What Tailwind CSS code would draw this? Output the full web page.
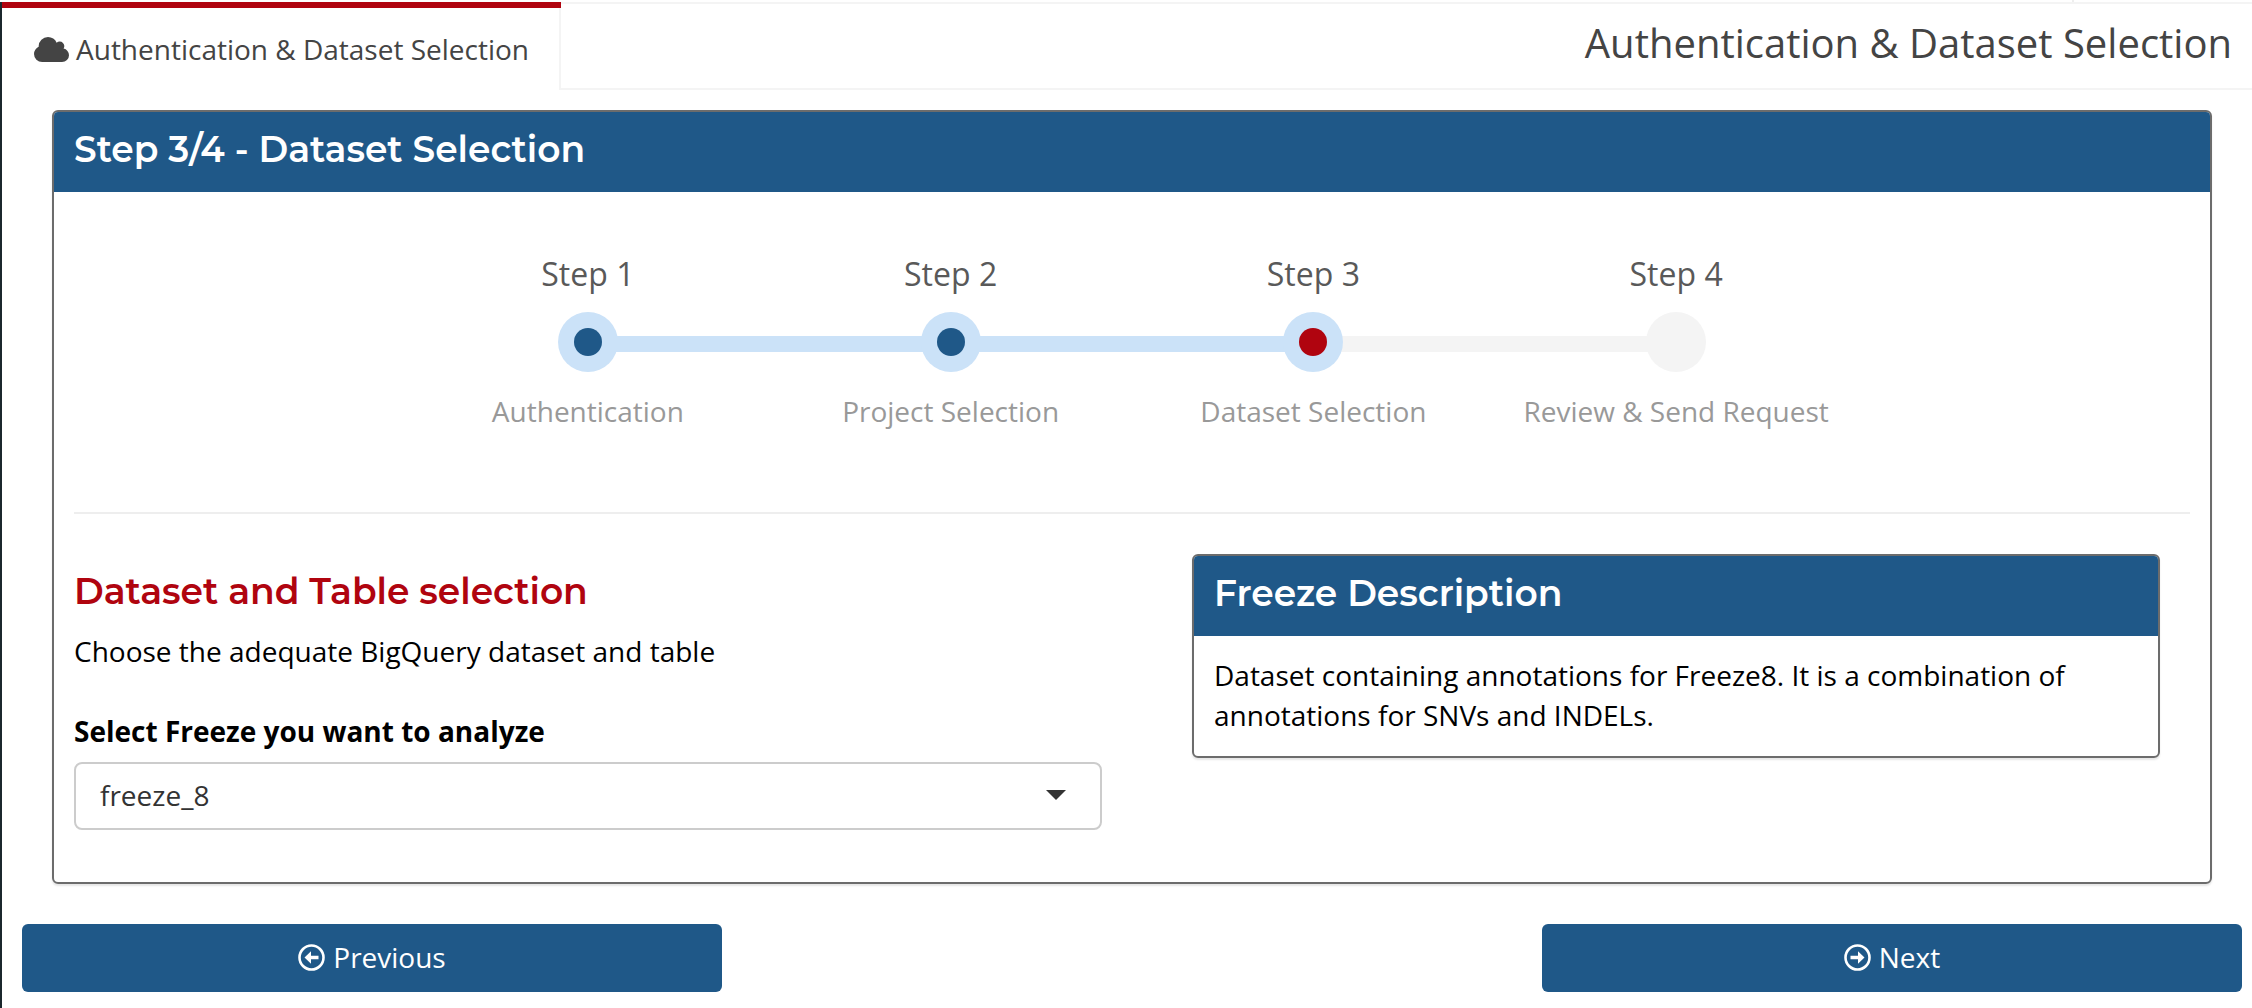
<!DOCTYPE html>
<html lang="en">
<head>
<meta charset="utf-8">
<title>Authentication &amp; Dataset Selection</title>
<script src="https://cdn.jsdelivr.net/npm/@tailwindcss/browser@4"></script>
</head>
<body class="bg-white overflow-hidden">
<div class="flex h-[1008px] w-[2252px] flex-col font-['Open_Sans','Noto_Sans',sans-serif] text-[28px] leading-[40px] text-black">
  <div class="mr-[178px] h-[2px] border-r-2 border-[#eee]"></div>
  <div class="flex grow border-l-2 border-[#1b272d]">
    <div class="flex grow flex-col">
      <header class="flex h-[88px]">
        <div class="z-10 flex w-[559px] items-start border-t-[6px] border-[#b0040f] pt-[21px] pl-8 text-[#444]">
          <svg class="mt-2 mr-[7px] h-[25px] w-[35px] fill-[#444]" viewBox="0 0 1920 1408" preserveAspectRatio="none"><path d="M1920 1024q0 159-112.500 271.500t-271.500 112.500h-1088q-185 0-316.500-131.500t-131.500-316.500q0-132 71-241.500t187-163.500q-2-28-2-43 0-212 150-362t362-150q158 0 286.500 88t187.500 230q70-62 166-62 106 0 181 75t75 181q0 75-41 138 129 30 213 134.500t84 239.500z"/></svg>
          <span class="whitespace-nowrap">Authentication &amp; Dataset Selection</span>
        </div>
        <div class="-ml-[2px] flex grow justify-end border-2 border-r-0 border-[#f4f4f4] pt-[17px] pr-5 text-[40px] leading-[44px] text-[#444]">Authentication &amp; Dataset Selection</div>
      </header>
      <main class="flex flex-col px-5 pt-5">
        <section class="mr-5 ml-[30px] flex h-[774px] flex-col rounded-[6px] border-2 border-[#6c6c6c] shadow-[0_2px_2px_rgba(0,0,0,0.1)]">
          <h3 class="h-20 rounded-t-[4px] bg-[#1f5888] px-5 pt-[15px] font-['Montserrat','Inter',sans-serif] text-[36px] leading-[44px] font-semibold text-white">Step 3/4 - Dataset Selection</h3>
          <div class="flex flex-col px-5">
            <ol class="mx-auto grid w-[1451px] grid-cols-4 pt-[58px] text-center">
              <li class="flex flex-col items-center">
                <span class="text-[32px] leading-[48px] text-[#595959]">Step 1</span>
                <div class="mt-[14px] grid h-[60px] w-full grid-cols-[1fr_60px_1fr] items-center"><i></i><i class="flex size-[60px] items-center justify-center rounded-full bg-[#cbe2f8]"><i class="size-7 rounded-full bg-[#1f5888]"></i></i><i class="mt-1 -ml-1 h-4 bg-[#cbe2f8]"></i></div>
                <span class="mt-[19px] text-[#999]">Authentication</span>
              </li>
              <li class="flex flex-col items-center">
                <span class="text-[32px] leading-[48px] text-[#595959]">Step 2</span>
                <div class="mt-[14px] grid h-[60px] w-full grid-cols-[1fr_60px_1fr] items-center"><i class="mt-1 -mr-1 h-4 bg-[#cbe2f8]"></i><i class="flex size-[60px] items-center justify-center rounded-full bg-[#cbe2f8]"><i class="size-7 rounded-full bg-[#1f5888]"></i></i><i class="mt-1 -ml-1 h-4 bg-[#cbe2f8]"></i></div>
                <span class="mt-[19px] text-[#999]">Project Selection</span>
              </li>
              <li class="flex flex-col items-center">
                <span class="text-[32px] leading-[48px] text-[#595959]">Step 3</span>
                <div class="mt-[14px] grid h-[60px] w-full grid-cols-[1fr_60px_1fr] items-center"><i class="mt-1 -mr-1 h-4 bg-[#cbe2f8]"></i><i class="z-10 flex size-[60px] items-center justify-center rounded-full bg-[#cbe2f8]"><i class="size-7 rounded-full bg-[#b0040f]"></i></i><i class="mt-1 -ml-1 h-4 bg-[#f4f4f4]"></i></div>
                <span class="mt-[19px] text-[#999]">Dataset Selection</span>
              </li>
              <li class="flex flex-col items-center">
                <span class="text-[32px] leading-[48px] text-[#595959]">Step 4</span>
                <div class="mt-[14px] grid h-[60px] w-full grid-cols-[1fr_60px_1fr] items-center"><i class="mt-1 -mr-1 h-4 bg-[#f4f4f4]"></i><i class="size-[60px] rounded-full bg-[#f4f4f4]"></i><i></i></div>
                <span class="mt-[19px] text-[#999]">Review &amp; Send Request</span>
              </li>
            </ol>
            <hr class="mt-[81px] border-t-2 border-[#eee]">
            <div class="flex pt-10">
              <div class="w-[1028px] pt-[15px]">
                <h3 class="font-['Montserrat','Inter',sans-serif] text-[36px] leading-[44px] font-semibold text-[#b0040f]">Dataset and Table selection</h3>
                <p class="mt-[18px]">Choose the adequate BigQuery dataset and table</p>
                <p class="mt-10 font-bold">Select Freeze you want to analyze</p>
                <div class="mt-[11px] flex h-[68px] items-center justify-between rounded-lg border-2 border-[#ccc] pr-[34px] pl-6 text-[#333]">
                  <span class="pb-[2px]">freeze_8</span>
                  <svg class="mb-[2px] h-[10px] w-5 fill-[#333]" viewBox="0 0 20 10"><path d="M0 0h20L10 10z"/></svg>
                </div>
              </div>
              <section class="ml-[90px] h-[204px] w-[968px] rounded-[6px] border-2 border-[#6c6c6c] shadow-[0_2px_2px_rgba(0,0,0,0.1)]">
                <h3 class="h-20 rounded-t-[4px] bg-[#1f5888] px-5 pt-[15px] font-['Montserrat','Inter',sans-serif] text-[36px] leading-[44px] font-semibold text-white">Freeze Description</h3>
                <p class="px-5 pt-[19px]">Dataset containing annotations for Freeze8. It is a combination of annotations for SNVs and INDELs.</p>
              </section>
            </div>
          </div>
        </section>
        <div class="-mr-[10px] mt-10 flex justify-between">
          <button class="flex h-[68px] w-[700px] items-center justify-center gap-2 rounded-[6px] bg-[#1f5888] pb-px text-white">
            <svg class="size-[27px]" viewBox="0 0 27 27"><circle cx="13.500" cy="13.500" r="12" fill="none" stroke="#fff" stroke-width="2.600"/><path fill="#fff" d="M6.500 13.500l6.500-6.200v4.400h7.500v3.600H13v4.400z"/></svg>
            <span class="pb-px">Previous</span>
          </button>
          <button class="flex h-[68px] w-[700px] items-center justify-center gap-2 rounded-[6px] bg-[#1f5888] pb-px text-white">
            <svg class="size-[27px]" viewBox="0 0 27 27"><circle cx="13.500" cy="13.500" r="12" fill="none" stroke="#fff" stroke-width="2.600"/><path fill="#fff" d="M20.500 13.500l-6.500-6.200v4.400H6.500v3.600H14v4.400z"/></svg>
            <span class="pb-px">Next</span>
          </button>
        </div>
      </main>
    </div>
  </div>
</div>
</body>
</html>
